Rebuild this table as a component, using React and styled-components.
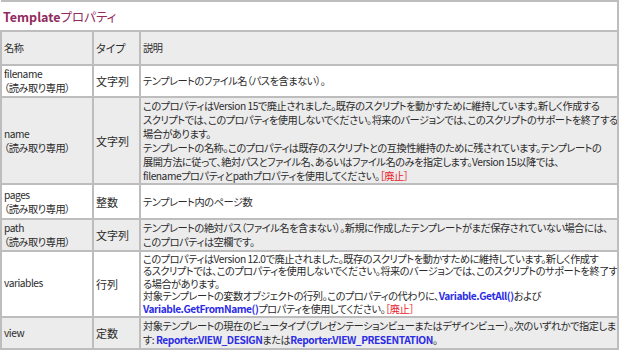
import React from 'react';
import styled, { createGlobalStyle } from 'styled-components';

const Global = createGlobalStyle`
  body {
    margin: 0;
    background: #ffffff;
    font-family: "Noto Sans CJK JP", "Noto Sans", sans-serif;
  }
`;

const rows = [
  {
    name: ['filename', '（読み取り専用）'],
    type: '文字列',
    h: 32,
    desc: [['テンプレートのファイル名（パスを含まない）。']],
  },
  {
    name: ['name', '（読み取り専用）'],
    type: '文字列',
    h: 87,
    shade: true,
    desc: [
      ['このプロパティはVersion 15で廃止されました。既存のスクリプトを動かすために維持しています。新しく作成する'],
      ['スクリプトでは、このプロパティを使用しないでください。将来のバージョンでは、このスクリプトのサポートを終了する'],
      ['場合があります。'],
      ['テンプレートの名称。このプロパティは既存のスクリプトとの互換性維持のために残されています。テンプレートの'],
      ['展開方法に従って、絶対パスとファイル名、あるいはファイル名のみを指定します。Version 15以降では、'],
      ['filenameプロパティとpathプロパティを使用してください。', { red: '［廃止］' }],
    ],
  },
  {
    name: ['pages', '（読み取り専用）'],
    type: '整数',
    h: 35,
    desc: [['テンプレート内のページ数']],
  },
  {
    name: ['path', '（読み取り専用）'],
    type: '文字列',
    h: 32,
    shade: true,
    desc: [
      ['テンプレートの絶対パス（ファイル名を含まない）。新規に作成したテンプレートがまだ保存されていない場合には、'],
      ['このプロパティは空欄です。'],
    ],
  },
  {
    name: ['variables'],
    type: '行列',
    h: 66,
    tight: true,
    desc: [
      ['このプロパティはVersion 12.0で廃止されました。既存のスクリプトを動かすために維持しています。新しく作成す'],
      ['るスクリプトでは、このプロパティを使用しないでください。将来のバージョンでは、このスクリプトのサポートを終了す'],
      ['る場合があります。'],
      ['対象テンプレートの変数オブジェクトの行列。このプロパティの代わりに、', { blue: 'Variable.GetAll()' }, 'および'],
      [{ blue: 'Variable.GetFromName()' }, 'プロパティを使用してください。', { red: '［廃止］' }],
    ],
  },
  {
    name: ['view'],
    type: '定数',
    h: 32,
    shade: true,
    desc: [
      ['対象テンプレートの現在のビュータイプ（プレゼンテーションビューまたはデザインビュー）。次のいずれかで指定しま'],
      ['す: ', { blue: 'Reporter.VIEW_DESIGN' }, 'または', { blue: 'Reporter.VIEW_PRESENTATION' }, '。'],
    ],
  },
];

const Table = styled.table`
  border-collapse: collapse;
  width: 619px;
  table-layout: fixed;
  font-size: 10.2px;
  line-height: 14px;
  letter-spacing: -0.45px;
  color: #2b2b2b;
  font-feature-settings: "palt";
`;

const Row = styled.tr`
  height: ${p => p.$h}px;
  background: ${p => (p.$shade ? '#ececec' : '#ffffff')};
  line-height: ${p => (p.$tight ? '12.6px' : '14px')};
`;

const Cell = styled.td`
  border: 2px solid #bdbdbd;
  padding: 0 2px;
  vertical-align: middle;
  white-space: nowrap;
  overflow: hidden;
`;

const TypeCell = styled(Cell)`
  font-size: 11px;
  letter-spacing: 0;
`;

const TitleCell = styled(Cell)`
  border-left: none;
  color: #922a5e;
  font-size: 12.5px;
  letter-spacing: 0;
  padding-top: 2px;
`;

const Bold = styled.b`
  font-weight: 700;
`;

const Line = styled.div`
  white-space: nowrap;
  height: ${p => (p.$tight ? '12.6px' : '14px')};
`;

const Link = styled.span`
  color: #2c2ce6;
  font-weight: 700;
`;

const Deprecated = styled.span`
  color: #e8202a;
`;

const renderPart = (part, i) => {
  if (typeof part === 'string') return <React.Fragment key={i}>{part}</React.Fragment>;
  if (part.blue) return <Link key={i}>{part.blue}</Link>;
  return <Deprecated key={i}>{part.red}</Deprecated>;
};

const App = () => (
  <>
    <Global />
    <Table>
      <colgroup>
        <col style={{ width: 92 }} />
        <col style={{ width: 47 }} />
        <col />
      </colgroup>
      <tbody>
        <Row $h={30}>
          <TitleCell colSpan={3}>
            <Bold>Template</Bold>プロパティ
          </TitleCell>
        </Row>
        <Row $h={34} $shade>
          <Cell>名称</Cell>
          <TypeCell>タイプ</TypeCell>
          <Cell>説明</Cell>
        </Row>
        {rows.map(r => (
          <Row key={r.name[0]} $h={r.h} $shade={r.shade} $tight={r.tight}>
            <Cell>
              {r.name.map(n => (
                <Line key={n}>{n}</Line>
              ))}
            </Cell>
            <TypeCell>{r.type}</TypeCell>
            <Cell>
              {r.desc.map((line, i) => (
                <Line key={i} $tight={r.tight}>{line.map(renderPart)}</Line>
              ))}
            </Cell>
          </Row>
        ))}
      </tbody>
    </Table>
  </>
);

export default App;
